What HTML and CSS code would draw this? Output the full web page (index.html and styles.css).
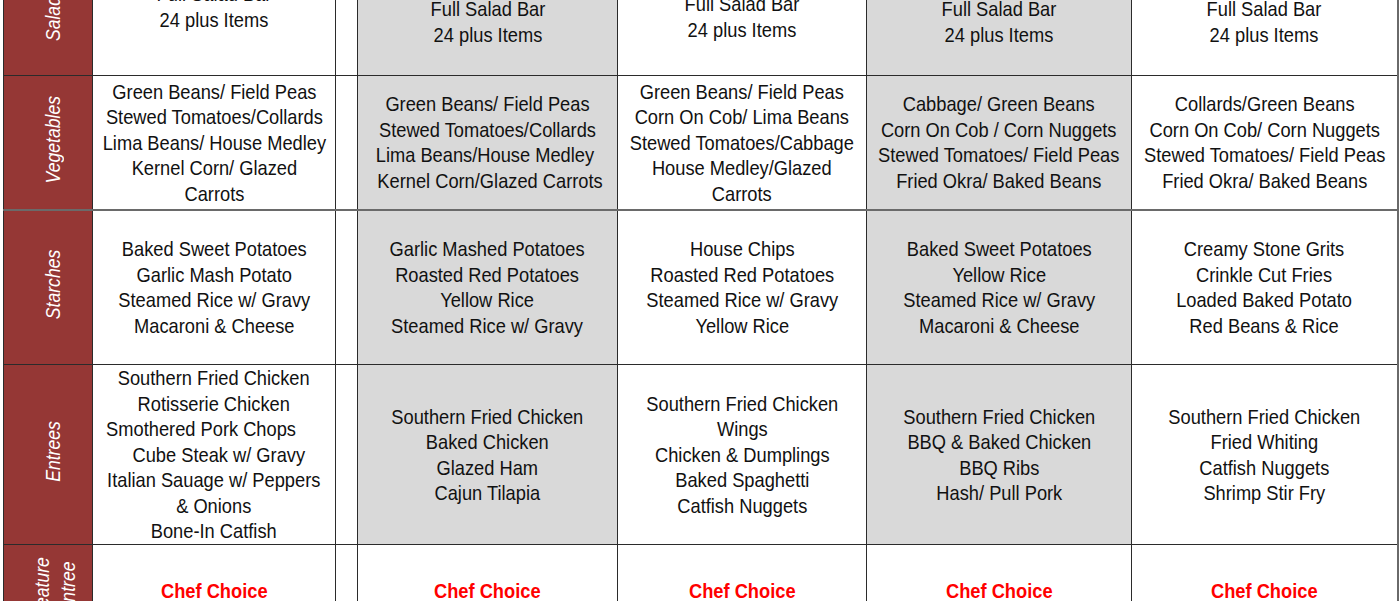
FILE: index.html
```html
<!DOCTYPE html>
<html>
<head>
<meta charset="utf-8">
<link rel="stylesheet" href="styles.css">
</head>
<body>
<table class="menu">
  <colgroup>
    <col class="c-label">
    <col class="c-1">
    <col class="c-gap">
    <col class="c-2">
    <col class="c-3">
    <col class="c-4">
    <col class="c-5">
  </colgroup>
  <tr class="r-salad">
    <th class="label"><span>Salad</span></th>
    <td class="pad-lg"><span class="t">Full Salad Bar<br>24 plus Items</span></td>
    <td class="gap"></td>
    <td class="shade"><span class="t">Full Salad Bar<br>24 plus Items</span></td>
    <td class="pad-sm"><span class="t">Full Salad Bar<br>24 plus Items</span></td>
    <td class="shade"><span class="t">Full Salad Bar<br>24 plus Items</span></td>
    <td><span class="t">Full Salad Bar<br>24 plus Items</span></td>
  </tr>
  <tr class="r-veg">
    <th class="label"><span>Vegetables</span></th>
    <td><span class="t">Green Beans/ Field Peas<br>Stewed Tomatoes/Collards<br>Lima Beans/ House Medley<br>Kernel Corn/ Glazed<br>Carrots</span></td>
    <td class="gap"></td>
    <td class="shade"><span class="t">Green Beans/ Field Peas<br>Stewed Tomatoes/Collards<br>Lima Beans/House Medley&nbsp;<br>&nbsp;Kernel Corn/Glazed Carrots</span></td>
    <td><span class="t">Green Beans/ Field Peas<br>Corn On Cob/ Lima Beans<br>Stewed Tomatoes/Cabbage<br>House Medley/Glazed<br>Carrots</span></td>
    <td class="shade"><span class="t">Cabbage/ Green Beans<br>Corn On Cob / Corn Nuggets<br>Stewed Tomatoes/ Field Peas<br>Fried Okra/ Baked Beans</span></td>
    <td><span class="t">Collards/Green Beans<br>Corn On Cob/ Corn Nuggets<br>Stewed Tomatoes/ Field Peas<br>Fried Okra/ Baked Beans</span></td>
  </tr>
  <tr class="r-starch">
    <th class="label"><span>Starches</span></th>
    <td><span class="t">Baked Sweet Potatoes<br>Garlic Mash Potato<br>Steamed Rice w/ Gravy<br>Macaroni &amp; Cheese</span></td>
    <td class="gap"></td>
    <td class="shade"><span class="t">Garlic Mashed Potatoes<br>Roasted Red Potatoes<br>Yellow Rice<br>Steamed Rice w/ Gravy</span></td>
    <td><span class="t">House Chips<br>Roasted Red Potatoes<br>Steamed Rice w/ Gravy<br>Yellow Rice</span></td>
    <td class="shade"><span class="t">Baked Sweet Potatoes<br>Yellow Rice<br>Steamed Rice w/ Gravy<br>Macaroni &amp; Cheese</span></td>
    <td><span class="t">Creamy Stone Grits<br>Crinkle Cut Fries<br>Loaded Baked Potato<br>Red Beans &amp; Rice</span></td>
  </tr>
  <tr class="r-entree">
    <th class="label"><span>Entrees</span></th>
    <td><span class="t">Southern Fried Chicken<br>Rotisserie Chicken<br>Smothered Pork Chops&nbsp;&nbsp;&nbsp;&nbsp;&nbsp;<br>&nbsp;&nbsp;Cube Steak w/ Gravy<br>Italian Sauage w/ Peppers<br>&amp; Onions<br>Bone-In Catfish</span></td>
    <td class="gap"></td>
    <td class="shade"><span class="t">Southern Fried Chicken<br>Baked Chicken<br>Glazed Ham<br>Cajun Tilapia</span></td>
    <td><span class="t">Southern Fried Chicken<br>Wings<br>Chicken &amp; Dumplings<br>Baked Spaghetti<br>Catfish Nuggets</span></td>
    <td class="shade"><span class="t">Southern Fried Chicken<br>BBQ &amp; Baked Chicken<br>BBQ Ribs<br>Hash/ Pull Pork</span></td>
    <td><span class="t">Southern Fried Chicken<br>Fried Whiting<br>Catfish Nuggets<br>Shrimp Stir Fry</span></td>
  </tr>
  <tr class="r-feature">
    <th class="label label-two"><span>Feature<br>Entree</span></th>
    <td class="chef"><span class="t">Chef Choice</span></td>
    <td class="gap"></td>
    <td class="chef"><span class="t">Chef Choice</span></td>
    <td class="chef"><span class="t">Chef Choice</span></td>
    <td class="chef"><span class="t">Chef Choice</span></td>
    <td class="chef"><span class="t">Chef Choice</span></td>
  </tr>
</table>
</body>
</html>
```

FILE: styles.css
```css
html, body {
  margin: 0;
  padding: 0;
  background: #ffffff;
  overflow: hidden;
}

body {
  font-family: "Liberation Sans", Arial, sans-serif;
  color: #111111;
}

.menu {
  border-collapse: collapse;
  table-layout: fixed;
  margin: -33px 0 0 3px;
  width: 1394px;
}

.c-label { width: 89px; }
.c-1 { width: 243px; }
.c-gap { width: 22px; }
.c-2 { width: 260px; }
.c-3 { width: 249px; }
.c-4 { width: 265px; }
.c-5 { width: 266px; }

.menu td,
.menu th {
  border: 1px solid #2b2b2b;
  padding: 0 2px;
  text-align: center;
  vertical-align: middle;
  font-size: 21px;
  line-height: 25.5px;
  white-space: nowrap;
}

.menu td:last-child {
  border-right: 2px solid #6a6a6a;
}

.t {
  display: inline-block;
  margin: 0 -60px;
  transform: scaleX(0.87);
  transform-origin: 50% 50%;
}

.r-salad { height: 108px; }
.r-veg { height: 134px; }
.r-starch { height: 155px; }
.r-entree { height: 180px; }
.r-feature { height: 92px; }

.menu .r-veg td,
.menu .r-veg th {
  border-bottom: 2px solid #6a6a6a;
}

.menu th.label {
  background: #953735;
  color: #ffffff;
  font-weight: normal;
  font-style: italic;
  font-size: 20px;
  line-height: 25px;
  padding: 0 0 0 10px;
}

.menu th.label-two {
  padding-left: 14px;
  line-height: 26px;
}

.label span {
  display: inline-block;
  writing-mode: vertical-rl;
  transform: rotate(180deg) scaleY(0.88);
}

.shade {
  background: #d9d9d9;
}

.menu td.pad-lg { padding-bottom: 30px; }
.menu td.pad-sm { padding-bottom: 10px; }

.chef {
  color: #ff0000;
  font-weight: bold;
}
```
